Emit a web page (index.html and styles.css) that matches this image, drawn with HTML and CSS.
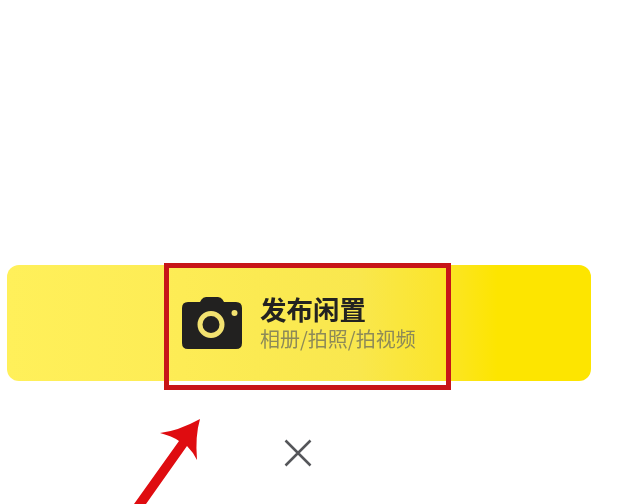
FILE: index.html
```html
<!DOCTYPE html>
<html lang="zh">
<head>
<meta charset="utf-8">
<title>发布闲置</title>
<link rel="stylesheet" href="styles.css">
</head>
<body>
<main class="page">
  <section class="banner">
    <svg class="camera" viewBox="0 0 60 52" aria-hidden="true">
      <path class="camera-body" d="M6 5H18L19.500 2.500Q21 0 24 0H36Q39 0 40.500 2.500L42 5H54Q60 5 60 11V46Q60 52 54 52H6Q0 52 0 46V11Q0 5 6 5Z"/>
      <circle class="camera-lens" cx="29" cy="27.500" r="11"/>
      <circle class="camera-flash" cx="52.500" cy="16" r="3"/>
    </svg>
    <div class="copy">
      <div class="title">发布闲置</div>
      <div class="subtitle">相册/拍照/拍视频</div>
    </div>
    <div class="highlight"></div>
  </section>
  <button class="close" aria-label="关闭">
    <svg viewBox="0 0 28 28" aria-hidden="true"><path d="M1.500 1.500L26.500 26.500M26.500 1.500L1.500 26.500"/></svg>
  </button>
  <svg class="arrow" viewBox="0 0 625 504" aria-hidden="true">
    <path d="M200 419Q178 431 160 433Q172 436 179 441L134 504H146L187 446Q193 452 197 460Q195 436 200 419Z"/>
  </svg>
</main>
</body>
</html>
```
FILE: styles.css
```css
* { box-sizing: border-box; }
html, body { margin: 0; height: 100%; background: #fff; overflow: hidden; }
.page {
  position: relative;
  height: 504px;
  padding: 265px 34px 0 7px;
  font-family: "Noto Sans CJK SC", "Liberation Sans", sans-serif;
  filter: blur(0.6px);
}
.banner {
  position: relative;
  display: flex;
  align-items: center;
  gap: 19px;
  height: 116px;
  padding-left: 175px;
  border-radius: 12px;
  background: linear-gradient(90deg, #fff05a 0%, #fdec55 30%, #f9e74e 60%, #fbe52c 74%, #fde500 84%, #fde500 100%);
}
.camera { width: 60px; height: 52px; flex: none; margin-top: -1px; }
.camera-body { fill: #222120; }
.camera-lens { fill: #222120; stroke: #f3e270; stroke-width: 5; }
.camera-flash { fill: #f3e270; }
.copy { display: flex; flex-direction: column; margin-top: -2px; margin-left: -1px; }
.title {
  padding-top: 4px;
  font-family: "Liberation Sans", "Noto Sans CJK SC", sans-serif;
  font-size: 26.500px;
  line-height: 30px;
  font-weight: 700;
  color: #232221;
}
.subtitle { font-size: 20px; line-height: 26px; color: #8d8a58; }
.highlight {
  position: absolute;
  left: 157px;
  top: -2px;
  width: 287px;
  height: 127px;
  border: 5px solid #c71518;
}
.close {
  display: block;
  width: 28px;
  height: 28px;
  margin: 58px 0 0 277px;
  padding: 0;
  border: 0;
  background: none;
}
.close svg { display: block; width: 28px; height: 28px; }
.close path { fill: none; stroke: #55565a; stroke-width: 2.500; }
.arrow { position: absolute; left: 0; top: 0; width: 625px; height: 504px; }
.arrow path { fill: #df0c10; }
```
